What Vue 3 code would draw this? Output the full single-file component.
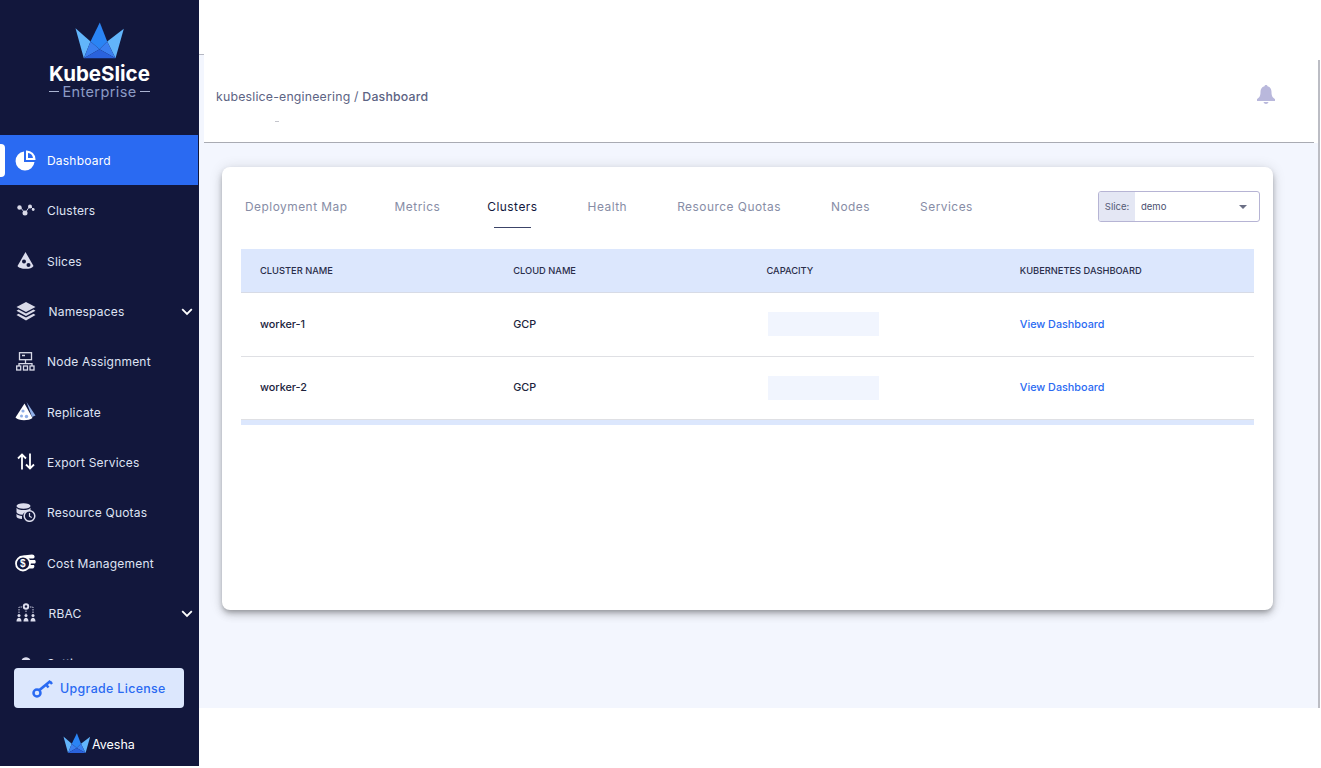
<script setup>
const navItems = [
  { label: 'Dashboard', icon: 'pie', active: true },
  { label: 'Clusters', icon: 'clusters' },
  { label: 'Slices', icon: 'slice' },
  { label: 'Namespaces', icon: 'layers', expand: true },
  { label: 'Node Assignment', icon: 'tree' },
  { label: 'Replicate', icon: 'replicate' },
  { label: 'Export Services', icon: 'arrows' },
  { label: 'Resource Quotas', icon: 'quota' },
  { label: 'Cost Management', icon: 'cost' },
  { label: 'RBAC', icon: 'rbac', expand: true },
  { label: 'Settings', icon: 'cloud' },
];

const tabs = ['Deployment Map', 'Metrics', 'Clusters', 'Health', 'Resource Quotas', 'Nodes', 'Services'];

const clusters = [
  { name: 'worker-1', cloud: 'GCP' },
  { name: 'worker-2', cloud: 'GCP' },
];

// crown facets, shared by the big logo and the small Avesha one
const crown = [
  { points: '.5,6.200 8.800,36.200 15.500,19.500', fill: '#62b5fb' },
  { points: '48.800,6.800 40.500,36.200 32.200,19.500', fill: '#62b5fb' },
  { points: '24.800,.5 15.500,19.500 24.500,27.200 32.200,19.500', fill: '#2a84f4' },
  { points: '15.500,19.500 24.500,27.200 8.800,36.200', fill: '#3a7ff0' },
  { points: '32.200,19.500 24.500,27.200 40.500,36.200', fill: '#3a7ff0' },
  { points: '24.500,27.200 8.800,36.200 40.500,36.200', fill: '#2a62dc' },
];
</script>

<template>
  <div class="page">
    <aside class="sidebar">
      <div class="brand">
        <svg class="crown" width="50" height="38" viewBox="0 0 50 38">
          <polygon v-for="f in crown" :key="f.points" :points="f.points" :fill="f.fill" />
        </svg>
        <div class="brand-name">KubeSlice</div>
        <div class="brand-sub"><i></i>Enterprise<i></i></div>
      </div>

      <nav class="nav">
        <div v-for="item in navItems" :key="item.label" class="nav-item" :class="{ active: item.active, expand: item.expand }">
          <span class="nav-icon">
            <svg v-if="item.icon === 'pie'" width="21" height="21" viewBox="0 0 21 21">
              <path d="M9 1.500a9.500 9.500 0 1 0 10.500 10.500H9z" fill="#fff" />
              <path d="M11 .5a9 9 0 0 1 9.500 9.500H11z" fill="#fff" />
              <path d="M13 3a6 6 0 0 1 5 5h-5z" fill="#2a6af2" />
            </svg>
            <svg v-else-if="item.icon === 'clusters'" width="18" height="12" viewBox="0 0 18 12">
              <path d="M3 3l5 6 5-7 3 3" fill="none" stroke="#c9cbe0" stroke-width="1" />
              <circle cx="2.500" cy="3.500" r="2.200" fill="#d9dae8" />
              <circle cx="8" cy="9" r="2.500" fill="#d9dae8" />
              <circle cx="13" cy="2.500" r="2" fill="#d9dae8" />
              <circle cx="16.200" cy="5.500" r="1.400" fill="#d9dae8" />
            </svg>
            <svg v-else-if="item.icon === 'slice'" width="17" height="18" viewBox="0 0 17 18">
              <path d="M8.500 0L.5 14c2 3.500 14 4 16 0z" fill="#dcdded" />
              <circle cx="7" cy="9.500" r="2" fill="#12173c" />
              <circle cx="11.500" cy="13" r="2" fill="#12173c" />
            </svg>
            <svg v-else-if="item.icon === 'layers'" width="20" height="19" viewBox="0 0 20 19">
              <path d="M10 0l9.500 5L10 10 .5 5z" fill="#d9dae8" />
              <path d="M2.500 7.600L10 11.500l7.500-3.900 2 1.200L10 14 .5 8.800z" fill="#d9dae8" />
              <path d="M2.500 11.800L10 15.500l7.500-3.700 2 1.200L10 18.500.5 13z" fill="#d9dae8" />
            </svg>
            <svg v-else-if="item.icon === 'tree'" width="19" height="19" viewBox="0 0 19 19" fill="none" stroke="#d9dae8" stroke-width="1.300">
              <rect x="3.500" y=".7" width="12" height="7" />
              <path d="M6 3.500h3M9.500 7.700v4M3 14v-2.300h13V14" />
              <rect x=".7" y="14" width="4" height="4" />
              <rect x="7.500" y="14" width="4" height="4" />
              <rect x="14" y="14" width="4" height="4" />
            </svg>
            <svg v-else-if="item.icon === 'replicate'" width="21" height="19" viewBox="0 0 21 19">
              <path d="M11.500 0l9 13.500-3.500 1.500z" fill="#8faee6" />
              <path d="M9.500 1.500L.5 15.500c3 3.500 13 3.500 17 .5z" fill="#fff" />
              <circle cx="8" cy="9" r="1.600" fill="#8faee6" />
              <circle cx="6.500" cy="14" r="1.500" fill="#8faee6" />
              <circle cx="11.500" cy="14.500" r="1.700" fill="#8faee6" />
            </svg>
            <svg v-else-if="item.icon === 'arrows'" width="18" height="17" viewBox="0 0 18 17" fill="none" stroke="#fff" stroke-width="1.800">
              <path d="M5 16.500V1.500M1 5.500l4-4 4 4" />
              <path d="M13 .5v15M9 11.500l4 4 4-4" />
            </svg>
            <svg v-else-if="item.icon === 'quota'" width="20" height="19" viewBox="0 0 20 19">
              <ellipse cx="7.500" cy="3" rx="7" ry="2.800" fill="#dcdded" />
              <path d="M.5 4.800c1 3 13 3 14 0v3c-4 .5-7 2-8 4C3 11.500.5 10.500.5 9z" fill="#dcdded" />
              <path d="M.5 10.800c1 1.500 3 2 5.500 2.200l0 3c-3 0-5.500-1-5.500-2.500z" fill="#dcdded" />
              <circle cx="13.500" cy="13" r="5.300" fill="none" stroke="#dcdded" stroke-width="1.500" />
              <path d="M13.500 10v3.200l2.200 1.300" fill="none" stroke="#dcdded" stroke-width="1.200" />
            </svg>
            <svg v-else-if="item.icon === 'cost'" width="21" height="18" viewBox="0 0 21 18">
              <path d="M8 1.500L17 .5c3 0 3.500 3.500 1 4H13zM14 6h6c1 1.500 1 2.500 0 3.500h-5.500zM14 11h5c1 1.500 0 3.500-1.500 3.500h-5z" fill="#fff" />
              <circle cx="8" cy="9.500" r="7" fill="#12173c" stroke="#fff" stroke-width="1.800" />
              <text x="8" y="13" text-anchor="middle" class="dollar">$</text>
            </svg>
            <svg v-else-if="item.icon === 'rbac'" width="20" height="19" viewBox="0 0 20 19">
              <circle cx="10" cy="3.500" r="3.200" fill="#dcdded" />
              <circle cx="10" cy="3.500" r="1.200" fill="#12173c" />
              <path d="M6 4H3v6.500M14 4h3v6.500M10 7.500v3" fill="none" stroke="#dcdded" stroke-width=".9" stroke-dasharray="1.500 1" />
              <circle cx="3" cy="12.500" r="1.500" fill="#dcdded" />
              <circle cx="10" cy="12.500" r="1.500" fill="#dcdded" />
              <circle cx="17" cy="12.500" r="1.500" fill="#dcdded" />
              <path d="M.5 18.500c0-5 5-5 5 0zM7.500 18.500c0-5 5-5 5 0zM14.500 18.500c0-5 5-5 5 0z" fill="#dcdded" />
            </svg>
            <svg v-else class="cloud" width="20" height="8" viewBox="0 0 20 8">
              <path d="M0 8c0-2.500 3-3.500 5.500-3.500C6.500 0 13.500 0 14.500 4.500 17 4.500 20 5.500 20 8z" fill="#dcdded" />
            </svg>
          </span>
          <span class="nav-label">{{ item.label }}</span>
          <svg v-if="item.expand" class="chevron" width="12" height="8" viewBox="0 0 12 8">
            <path d="M1.200 1.200L6 6l4.800-4.800" fill="none" stroke="#fff" stroke-width="1.800" />
          </svg>
        </div>
      </nav>

      <div class="side-foot">
        <button class="upgrade">
          <svg width="21" height="19" viewBox="0 0 21 19" fill="none" stroke="#2a6af2">
            <circle cx="5" cy="14" r="3.500" stroke-width="2.500" />
            <path d="M7.500 11L18.500 2" stroke-width="2.800" />
            <path d="M14 5.500l2.500 3M18 2.500l2 2.500" stroke-width="2.500" />
          </svg>
          <span>Upgrade License</span>
        </button>
        <div class="avesha">
          <svg width="28" height="21" viewBox="0 0 50 38">
            <polygon v-for="f in crown" :key="f.points" :points="f.points" :fill="f.fill" />
          </svg>
          <span>Avesha</span>
        </div>
      </div>
    </aside>

    <div class="content">
      <div class="top-gap"><span class="top-strip"></span></div>
      <main class="main">
        <header class="header">
          <div class="crumbs">kubeslice-engineering / <b>Dashboard</b></div>
          <svg class="bell" width="18" height="19" viewBox="0 0 18 19">
            <path d="M9 0C8 0 7.500.6 7.500 1.300 4.500 2 3.500 4.500 3.500 7c0 4-1 5.500-3.500 7v2h18v-2c-2.500-1.500-3.500-3-3.500-7 0-2.500-1-5-4-5.700C10.500.6 10 0 9 0z" fill="#b9b8dc" />
            <path d="M6.500 17h5c-.3 1.300-1.300 2-2.500 2s-2.200-.7-2.500-2z" fill="#b9b8dc" />
          </svg>
          <span class="clip-mark"></span>
        </header>

        <section class="card">
          <div class="card-top">
            <div class="tabs">
              <span v-for="tab in tabs" :key="tab" class="tab" :class="{ current: tab === 'Clusters' }">{{ tab }}</span>
            </div>
            <div class="slice-select">
              <span class="slice-label">Slice:</span>
              <span class="slice-value">demo</span>
              <span class="caret"></span>
            </div>
          </div>

          <table class="cluster-table">
            <thead>
              <tr>
                <th>CLUSTER NAME</th>
                <th>CLOUD NAME</th>
                <th>CAPACITY</th>
                <th>KUBERNETES DASHBOARD</th>
              </tr>
            </thead>
            <tbody>
              <tr v-for="c in clusters" :key="c.name">
                <td>{{ c.name }}</td>
                <td>{{ c.cloud }}</td>
                <td><div class="capacity"></div></td>
                <td><a class="dash-link">View Dashboard</a></td>
              </tr>
            </tbody>
          </table>
          <div class="table-foot"></div>
        </section>
      </main>
    </div>
  </div>
</template>

<style>
html, body { background: #fff; }
</style>

<style scoped>
.page { display: flex; width: 1321px; height: 768px; overflow: hidden; font-family: Inter, "Liberation Sans", sans-serif; }

.sidebar { width: 199px; height: 766px; flex: none; background: #12173c; display: flex; flex-direction: column; color: #dfe3f3; }
.brand { height: 135px; flex: none; box-sizing: border-box; padding-top: 22px; display: flex; flex-direction: column; align-items: center; }
.crown { display: block; }
.brand-name { color: #fff; font-size: 20.5px; font-weight: 700; line-height: 21px; margin-top: 2.5px; }
.brand-sub { display: flex; align-items: center; gap: 3px; color: #8c9bc4; font-size: 14.5px; line-height: 16px; letter-spacing: 0.4px; }
.brand-sub i { display: block; width: 10px; height: 1px; background: #aab4d2; }

.nav { height: 525px; flex: none; overflow: hidden; }
.nav-item { position: relative; height: 50.3px; display: flex; align-items: center; font-size: 12px; letter-spacing: 0.2px; width: 198px; }
.nav-item:not(.active) .nav-label { padding-top: 1px; }
.nav-item.active { background: #2a6af2; color: #fff; }
.nav-item.active::before { content: ""; position: absolute; left: 0; top: 9px; width: 5px; height: 33px; background: #fff; border-radius: 0 4px 4px 0; }
.nav-icon { width: 47px; flex: none; display: flex; justify-content: center; padding-left: 8px; padding-right: 4px; box-sizing: border-box; }
.nav-item.expand .nav-label { margin-left: 1.500px; }
.cloud { position: absolute; top: 18px; left: 16px; }
.chevron { position: absolute; right: 5px; top: 22px; }
.dollar { font-size: 10px; font-weight: 700; fill: #fff; font-family: "Liberation Sans", sans-serif; }

.side-foot { flex: 1; display: flex; flex-direction: column; padding-top: 8px; }
.upgrade { width: 170px; height: 40px; flex: none; margin-left: 14px; border: 0; border-radius: 4px; background: #dce7fd; color: #2a6af2; font: 500 12.4px Inter, "Liberation Sans", sans-serif; letter-spacing: 0.35px; display: flex; align-items: center; gap: 7px; padding: 0 0 0 18px; }
.avesha { display: flex; align-items: center; gap: 1px; margin: 23px 0 0 63px; color: #fff; font-size: 12.5px; line-height: 21px; }
.avesha span { padding-top: 3px; }

.content { flex: 1; display: flex; flex-direction: column; min-width: 0; }
.top-gap { height: 60px; flex: none; display: flex; align-items: flex-end; }
.top-strip { width: 5px; height: 5px; background: #f3f6fe; border-top: 1px solid #b5b7c2; }
.main { height: 648px; flex: none; width: 1121px; box-sizing: border-box; background: #f3f6fe; border-right: 2px solid #bcbdc4; padding-left: 5px; }

.header { position: relative; height: 83px; box-sizing: border-box; background: #fff; display: flex; align-items: center; justify-content: space-between; padding: 0 43px 0 12px; }
.header::after { content: ""; position: absolute; left: 0; right: 4px; bottom: 0; height: 1px; background: #a9abb3; }
.crumbs { font-size: 12.3px; letter-spacing: 0.2px; color: #5d6484; margin-top: -10px; }
.crumbs b { font-weight: 500; }
.bell { margin-top: -15px; }
.clip-mark { position: absolute; left: 71px; bottom: 21px; width: 4px; height: 1px; background: #c4c5cc; }

.card { width: 1051px; height: 443px; margin: 24px 0 0 18px; box-sizing: border-box; background: #fff; border-radius: 8px; padding: 24px 13px 0 19px; box-shadow: 0 3px 5px -1px rgba(0,0,0,.25), 0 5px 8px rgba(0,0,0,.14), 0 1px 14px rgba(0,0,0,.12); }
.card-top { height: 58px; display: flex; justify-content: space-between; align-items: flex-start; }
.tabs { display: flex; gap: 47px; padding: 8px 0 0 4px; }
.tab { position: relative; font-size: 11.9px; letter-spacing: 0.5px; color: #878da6; line-height: 15px; }
.tab:nth-child(n+4) { margin-left: 3px; }
.tab.current { color: #12173c; }
.tab.current::after { content: ""; position: absolute; left: 7px; right: 7px; top: 28px; height: 1px; background: #3c4468; }
.slice-select { width: 162px; height: 31px; box-sizing: border-box; border: 1px solid #b6b4d4; border-radius: 3px; display: flex; align-items: center; font-size: 9.5px; color: #555b76; overflow: hidden; position: relative; }
.slice-label { width: 36px; height: 100%; background: #e4e7f4; display: flex; align-items: center; justify-content: center; flex: none; }
.slice-value { margin-left: 6px; color: #4a5070; }
.caret { position: absolute; right: 12px; top: 13px; width: 0; height: 0; border-left: 4.5px solid transparent; border-right: 4.5px solid transparent; border-top: 4.5px solid #6b6f85; }

.cluster-table { width: 1013px; border-collapse: collapse; table-layout: fixed; }
.cluster-table th { height: 43px; padding: 0 0 0 19px; background: #dce7fd; border-bottom: 1px solid #d7dbe6; font-size: 9.3px; font-weight: 500; color: #2a2e4a; text-align: left; }
.cluster-table td { height: 62.5px; padding: 0 0 0 19px; border-bottom: 1px solid #dfe0e4; font-size: 10.8px; font-weight: 500; color: #20233c; }
.capacity { width: 111px; height: 24px; margin-left: 1.5px; background: #f1f5fe; }
.dash-link { color: #2a6af2; font-weight: 500; }
.table-foot { width: 1013px; height: 4.5px; background: #dce7fd; }
</style>
